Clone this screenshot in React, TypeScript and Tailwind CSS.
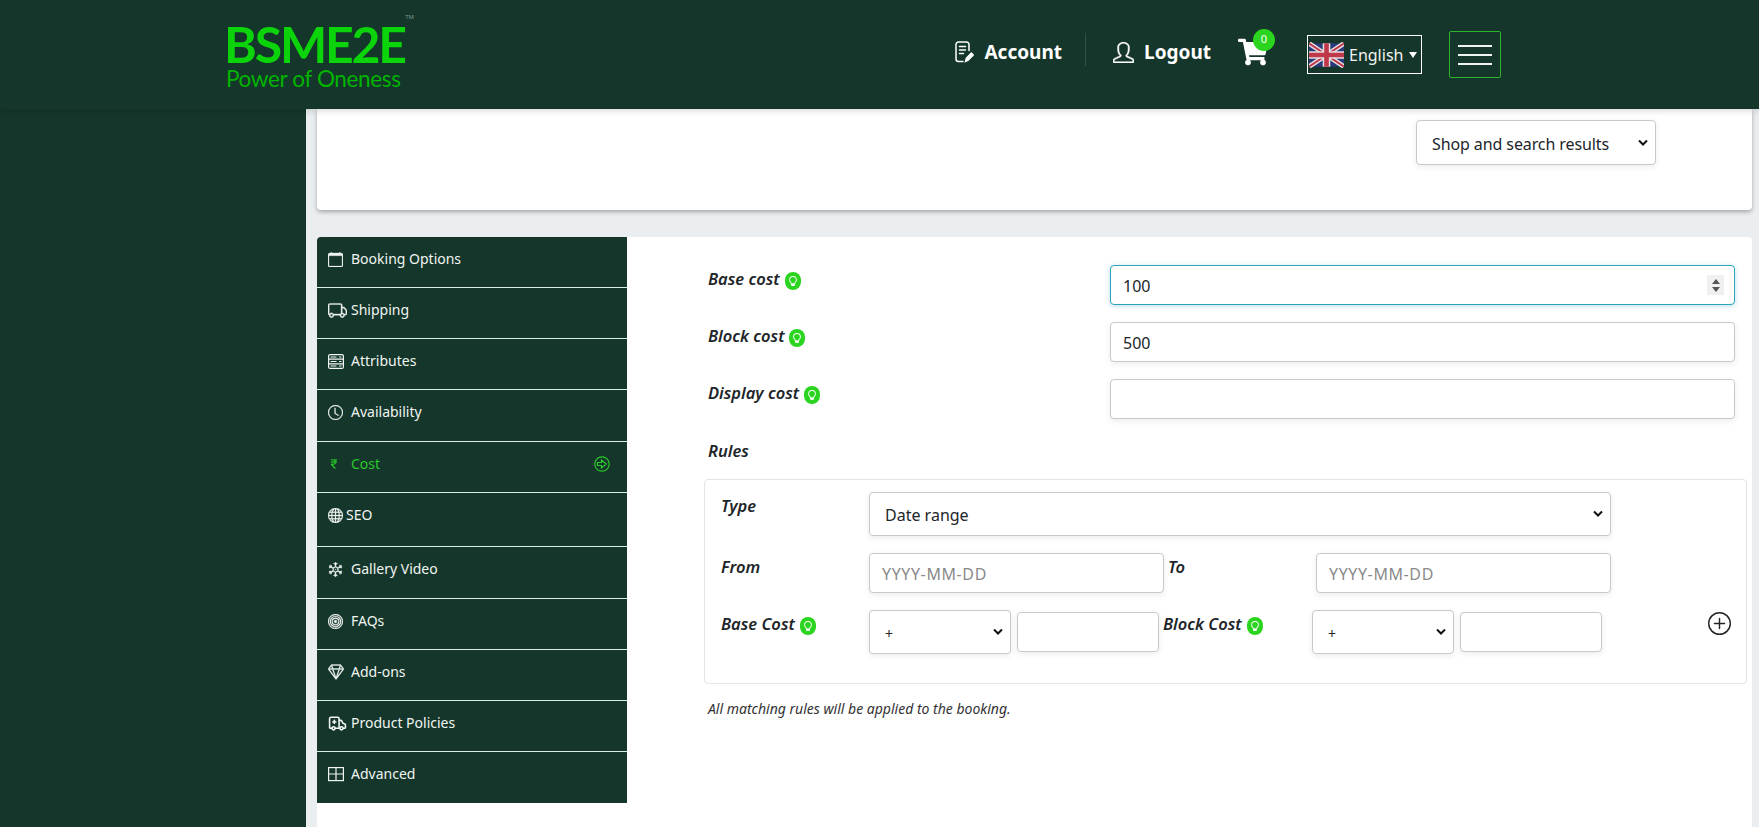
import type { ReactNode } from "react";
import { BsCalendar, BsTruck, BsClock, BsCurrencyRupee, BsGlobe, BsSnow3, BsBullseye, BsGem, BsPlusCircle, BsLightbulb } from "react-icons/bs";
import { FaShoppingCart } from "react-icons/fa";
import { SlUser } from "react-icons/sl";
import { Ambulance } from "lucide-react";

const font = { fontFamily: '"Noto Sans", sans-serif' };
const thick = { stroke: "currentColor", strokeWidth: 0.3 };

function GridIcon() {
  return (
    <svg width="16" height="16" viewBox="0 0 16 16" fill="none" stroke="currentColor" strokeWidth="1.2">
      <rect x="0.6" y="1.6" width="14.8" height="13" />
      <path d="M8 1.6v13M0.6 8h14.8" />
    </svg>
  );
}

function RackIcon() {
  return (
    <svg width="16" height="15" viewBox="0 0 16 15" fill="none" stroke="currentColor" strokeWidth="1.2">
      <rect x="0.6" y="0.6" width="14.8" height="13.8" rx="1.5" />
      <path d="M0.6 5.2h14.8M0.6 9.8h14.8M2.5 3h6M2.5 7.5h6M2.5 12h6M11 3h2.5M11 7.5h2.5M11 12h2.5" />
    </svg>
  );
}

function ArrowCircle() {
  return (
    <svg width="16" height="16" viewBox="0 0 16 16" fill="none" stroke="currentColor" strokeWidth="1.2">
      <circle cx="8" cy="8" r="7.2" />
      <path d="M3.5 6.5h4V4l4.8 4-4.8 4V9.5h-4z" />
    </svg>
  );
}

function NoteIcon() {
  return (
    <svg width="19" height="22" viewBox="0 0 19 22" fill="none" stroke="currentColor" strokeWidth="1.5" strokeLinecap="round">
      <path d="M8 20.5H3.5a2.5 2.5 0 0 1-2.5-2.5V3.5A2.5 2.5 0 0 1 3.5 1h8A2.5 2.5 0 0 1 14 3.5v6" />
      <path d="M4.5 5.5h6M4.5 9h6M4.5 12.5h4" />
      <path d="M10.5 20.5l.8-3.2 5-5.3 1.9 1.9-5 5.3z" fill="currentColor" />
    </svg>
  );
}

const menu: { label: string; icon: ReactNode; gap: string; h: string; active?: boolean }[] = [
  { label: "Booking Options", icon: <BsCalendar size={15} {...thick} />, gap: "ml-[8px]", h: "h-[51px]" },
  { label: "Shipping", icon: <BsTruck size={19} {...thick} />, gap: "ml-[4px]", h: "h-[51px]" },
  { label: "Attributes", icon: <RackIcon />, gap: "ml-[7px]", h: "h-[51px]" },
  { label: "Availability", icon: <BsClock size={15} {...thick} />, gap: "ml-[8px]", h: "h-[52px]" },
  { label: "Cost", icon: <BsCurrencyRupee size={12} {...thick} />, gap: "ml-[11px]", h: "h-[51px]", active: true },
  { label: "SEO", icon: <BsGlobe size={15} {...thick} />, gap: "ml-[3px]", h: "h-[54px]" },
  { label: "Gallery Video", icon: <BsSnow3 size={15} {...thick} />, gap: "ml-[8px]", h: "h-[52px]" },
  { label: "FAQs", icon: <BsBullseye size={15} {...thick} />, gap: "ml-[8px]", h: "h-[51px]" },
  { label: "Add-ons", icon: <BsGem size={16} {...thick} />, gap: "ml-[7px]", h: "h-[51px]" },
  { label: "Product Policies", icon: <Ambulance size={19} strokeWidth={2} />, gap: "ml-[4px]", h: "h-[51px]" },
  { label: "Advanced", icon: <GridIcon />, gap: "ml-[7px]", h: "h-[52px]" },
];

function Hint() {
  return (
    <span className="mt-[3px] inline-flex h-[18px] w-[16px] items-center justify-center rounded-full bg-[#2bd41f] text-white">
      <BsLightbulb size={10} stroke="currentColor" strokeWidth={0.5} />
    </span>
  );
}

function Select({ value, className, textClass }: { value: string; className: string; textClass: string }) {
  return (
    <div className={`relative ${className}`}>
      <select className={`h-full w-full appearance-none rounded-[4px] border border-[#c9c9c9] bg-white pt-[2px] pl-[15px] pr-[6px] text-[#212529] shadow-[0_2px_6px_rgba(0,0,0,0.08)] outline-none ${textClass}`}>
        <option>{value}</option>
      </select>
      <svg width="10" height="7" viewBox="0 0 10 7" fill="none" stroke="#111" strokeWidth="2" className="absolute top-1/2 right-[8px] -translate-y-1/2">
        <path d="M1 1l4 4 4-4" />
      </svg>
    </div>
  );
}

const inputCls =
  "rounded-[4px] border border-[#c9c9c9] bg-white px-[12px] pt-[2px] text-[16px] text-[#212529] shadow-[0_2px_6px_rgba(0,0,0,0.08)] outline-none placeholder:text-[#8a8a8a] placeholder:tracking-[0.6px]";
const labelCls = "text-[16.5px] leading-[24px] font-semibold italic text-[#212529]";

function CostRow({ label, value }: { label: string; value: string }) {
  return (
    <div className="flex items-start">
      <div className={`flex w-[402px] items-center gap-[5px] pt-[2px] ${labelCls}`}>
        {label}
        <Hint />
      </div>
      <input readOnly value={value} className={`h-[40px] w-[625px] ${inputCls}`} />
    </div>
  );
}

export default function App() {
  return (
    <div className="flex h-screen flex-col overflow-hidden bg-[#15362a]" style={font}>
      <header className="relative z-10 flex h-[109px] shrink-0 items-center bg-[#15362a] pl-[224px] pr-[258px] shadow-[0_2px_6px_rgba(0,0,0,0.15)]">
        <div className="relative mt-[3px] w-[180px] leading-none text-[#0bd40b]">
          <div className="text-[50px] leading-[44px] font-bold tracking-[-2.2px] whitespace-nowrap" style={{ fontFamily: '"Lato", sans-serif' }}>
            BSME2E
          </div>
          <div className="mt-[1px] ml-[2px] text-[22.6px] leading-[24px] tracking-[-0.4px] whitespace-nowrap text-[#00b400]" style={{ fontFamily: '"Lato", sans-serif' }}>
            Power of Oneness
          </div>
          <span className="absolute -top-[8px] -right-[10px] text-[6px] text-[#7d9c8e]">TM</span>
        </div>

        <nav className="ml-auto flex items-center text-white">
          <div className="-mt-[5px] flex items-center">
            <NoteIcon />
            <span className="ml-[10px] text-[19px] font-bold">Account</span>
          </div>
          <div className="ml-[23px] mr-[27px] -mt-[10px] h-[33px] w-px bg-[#2c5244]" />
          <div className="-mt-[5px] flex items-center">
            <SlUser size={21} stroke="currentColor" strokeWidth={25} />
            <span className="ml-[10px] text-[19px] font-bold">Logout</span>
          </div>
          <div className="relative ml-[27px] -mt-[6px]">
            <FaShoppingCart size={30} />
            <span className="absolute -top-[8px] left-[15px] flex h-[22px] w-[22px] items-center justify-center rounded-full bg-[#2bd41f] text-[11px] text-white">
              0
            </span>
          </div>
          <div className="ml-[39px] flex h-[39px] w-[115px] items-center border border-white pl-[1px]">
            <svg width="35" height="26" viewBox="0 0 60 40" className="rounded-[2px]">
              <rect width="60" height="40" fill="#2b3a7a" />
              <path d="M0 0L60 40M60 0L0 40" stroke="#e6dfe2" strokeWidth="8" />
              <path d="M0 0L60 40M60 0L0 40" stroke="#c0394a" strokeWidth="3" />
              <path d="M30 0V40M0 20H60" stroke="#e6dfe2" strokeWidth="13" />
              <path d="M30 0V40M0 20H60" stroke="#c0394a" strokeWidth="8" />
            </svg>
            <span className="ml-[5px] text-[16px] text-[#f2f2f2]">English</span>
            <svg width="8" height="6" viewBox="0 0 8 6" className="ml-[6px]">
              <path d="M0 0h8L4 6z" fill="#fff" />
            </svg>
          </div>
          <button className="ml-[27px] flex h-[47px] w-[52px] flex-col items-center justify-center gap-[7px] rounded-[2px] border border-[#2db52d]">
            <span className="h-[2px] w-[34px] bg-[#eef2f0]" />
            <span className="h-[2px] w-[34px] bg-[#eef2f0]" />
            <span className="h-[2px] w-[34px] bg-[#eef2f0]" />
          </button>
        </nav>
      </header>

      <div className="flex min-h-0 flex-1">
        <aside className="w-[306px] shrink-0 bg-[#15362a]" />
        <main className="min-w-0 flex-1 bg-[#ebeef1] pl-[11px] pr-[7px]">
          <section className="flex h-[101px] justify-end rounded-b-[4px] bg-white pt-[11px] pr-[96px] shadow-[0_2px_4px_rgba(0,0,0,0.3)]">
            <Select value="Shop and search results" className="h-[45px] w-[240px]" textClass="text-[16px] tracking-[-0.1px]" />
          </section>

          <section className="mt-[27px] flex h-full rounded-t-[4px] bg-white">
            <ul className="h-[566px] w-[310px] shrink-0 overflow-hidden rounded-tl-[4px] bg-[#15362a]">
              {menu.map((item, i) => (
                <li
                  key={item.label}
                  className={`flex items-start pl-[11px] pr-[17px] pt-[10px] text-[14px] leading-[24px] ${item.h} ${
                    i < menu.length - 1 ? "border-b border-[#d8efe6]" : ""
                  } ${item.active ? "text-[#2bc92b]" : "text-[#f0f5f2]"}`}
                >
                  <span className="flex h-[24px] items-center">{item.icon}</span>
                  <span className={item.gap}>{item.label}</span>
                  {item.active && (
                    <span className="ml-auto flex h-[24px] items-center">
                      <ArrowCircle />
                    </span>
                  )}
                </li>
              ))}
            </ul>

            <div className="min-w-0 flex-1 pt-[28px] pl-[81px] pr-[17px]">
              <div className="flex flex-col gap-[17px]">
                <div className="flex items-start">
                  <div className={`flex w-[402px] items-center gap-[5px] pt-[2px] ${labelCls}`}>
                    Base cost
                    <Hint />
                  </div>
                  <div className="relative">
                    <input
                      readOnly
                      value="100"
                      className="h-[40px] w-[625px] rounded-[4px] border border-[#2ea3bd] bg-white px-[12px] pt-[2px] text-[16px] text-[#212529] shadow-[0_1px_5px_rgba(46,163,189,0.35)] outline-none"
                    />
                    <span className="absolute top-[10px] right-[11px] flex h-[20px] w-[17px] flex-col items-center justify-center gap-[3px] bg-[#f0f0f0]">
                      <svg width="8" height="5" viewBox="0 0 8 5"><path d="M0 5L4 0l4 5z" fill="#555" /></svg>
                      <svg width="8" height="5" viewBox="0 0 8 5"><path d="M0 0l4 5 4-5z" fill="#555" /></svg>
                    </span>
                  </div>
                </div>
                <CostRow label="Block cost" value="500" />
                <CostRow label="Display cost" value="" />
              </div>

              <div className={`mt-[20px] ${labelCls}`}>Rules</div>

              <div className="-ml-[4px] mt-[16px] h-[205px] w-[1043px] rounded-[4px] border border-[#e2e4e6] pl-[16px] pr-[15px] pt-[12px]">
                <div className="flex items-start">
                  <div className={`w-[148px] pt-[2px] ${labelCls}`}>Type</div>
                  <Select value="Date range" className="h-[44px] w-[742px]" textClass="text-[16px]" />
                </div>
                <div className="mt-[17px] flex items-start">
                  <div className={`w-[148px] pt-[2px] ${labelCls}`}>From</div>
                  <input readOnly placeholder="YYYY-MM-DD" className={`h-[40px] w-[295px] ${inputCls}`} />
                  <div className={`ml-[4px] w-[148px] pt-[2px] ${labelCls}`}>To</div>
                  <input readOnly placeholder="YYYY-MM-DD" className={`h-[40px] w-[295px] ${inputCls}`} />
                </div>
                <div className="mt-[17px] flex items-start">
                  <div className={`flex w-[148px] items-center gap-[5px] pt-[2px] ${labelCls}`}>
                    Base Cost
                    <Hint />
                  </div>
                  <Select value="+" className="h-[44px] w-[142px]" textClass="text-[14px]" />
                  <input readOnly className={`ml-[6px] mt-[2px] h-[40px] w-[142px] ${inputCls}`} />
                  <div className={`ml-[4px] flex w-[149px] items-center gap-[5px] pt-[2px] ${labelCls}`}>
                    Block Cost
                    <Hint />
                  </div>
                  <Select value="+" className="h-[44px] w-[142px]" textClass="text-[14px]" />
                  <input readOnly className={`ml-[6px] mt-[2px] h-[40px] w-[142px] ${inputCls}`} />
                  <span className="ml-auto mt-[2px] text-[#212529]">
                    <BsPlusCircle size={23} />
                  </span>
                </div>
              </div>

              <p className="mt-[15px] text-[14px] leading-[20px] italic text-[#333]">
                All matching rules will be applied to the booking.
              </p>
            </div>
          </section>
        </main>
      </div>
    </div>
  );
}
